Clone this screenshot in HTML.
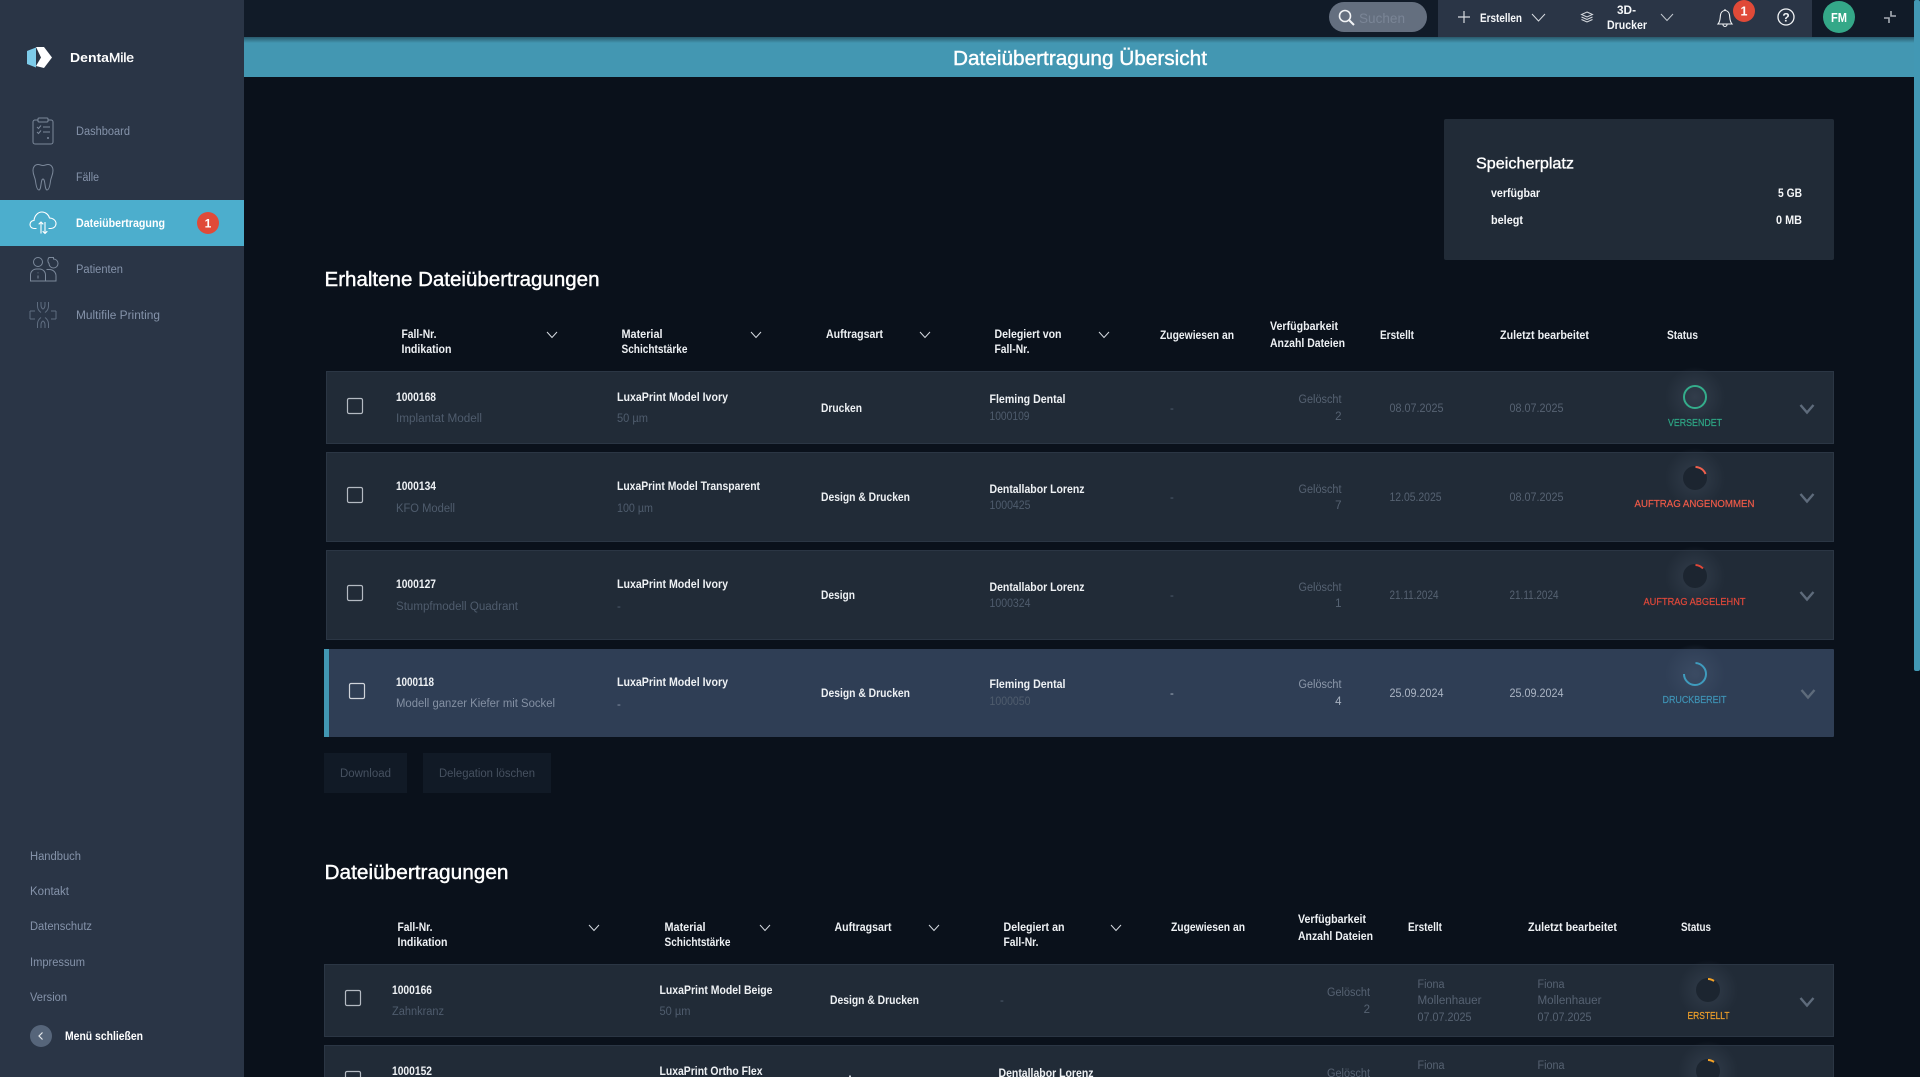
<!DOCTYPE html>
<html lang="de">
<head>
<meta charset="utf-8">
<title>Dateiübertragung Übersicht</title>
<style>
html,body{margin:0;padding:0;background:#0a111b;width:1920px;height:1077px;overflow:hidden}
svg{display:block;font-family:"Liberation Sans",Arial,sans-serif}
text{white-space:pre}
.nav{font-size:11.5px;fill:#8593aa;font-weight:400}
.foot{font-size:11.5px;fill:#8593aa}
.h{font-size:11.5px;font-weight:700;fill:#eef1f4}
.p{font-size:11.5px;font-weight:700;fill:#eef1f4}
.s{font-size:11.5px;fill:#4f5c6d}
.d{font-size:11.5px;fill:#566272}
.g{font-size:11.5px;fill:#566272;text-anchor:end}
.l{font-size:10.5px;font-weight:400;text-anchor:middle;stroke-width:.2px}
.t{font-size:20px;font-weight:400;fill:#fff;stroke:#fff;stroke-width:.4px}
.w{font-size:11.5px;font-weight:700;fill:#f5f7f9}
.row{fill:#212b37;stroke:#2b3644;stroke-width:1}
.cb{fill:none;stroke:#b4bac2;stroke-width:1.2}
.hc{fill:none;stroke:#d5dae0;stroke-width:1}
.rc{fill:none;stroke:#5e6b7b;stroke-width:2.4}
.ic{fill:none;stroke:#7c899b;stroke-width:1}
</style>
</head>
<body>
<svg xmlns="http://www.w3.org/2000/svg" width="1920" height="1077" viewBox="0 0 1920 1077">
<defs>
<linearGradient id="sh" x1="0" y1="0" x2="0" y2="1"><stop offset="0" stop-color="#2a5a6c"/><stop offset="1" stop-color="#4397b2"/></linearGradient>
<radialGradient id="glow"><stop offset="0" stop-color="#323d4b"/><stop offset="1" stop-color="#323d4b" stop-opacity="0"/></radialGradient>
<radialGradient id="glow2"><stop offset="0" stop-color="#3b4b63"/><stop offset="1" stop-color="#3b4b63" stop-opacity="0"/></radialGradient>
<path id="hc" class="hc" d="M-5,-3 L0,2.5 L5,-3"/>
<path id="rc" class="rc" d="M-6.5,-4 L0,3.5 L6.5,-4"/>
</defs>

<!-- main background -->
<rect width="1920" height="1077" fill="#0a111b"/>

<!-- top bar -->
<rect x="244" y="0" width="1670" height="37" fill="#111b28"/>
<rect x="1438" y="0" width="374" height="37" fill="#2a3546"/>
<rect x="1329" y="2" width="98" height="30" rx="15" fill="#646f7f"/>
<circle cx="1345" cy="16" r="5.5" fill="none" stroke="#f2f4f6" stroke-width="1.6"/>
<path d="M1349,20 L1354,25" stroke="#f2f4f6" stroke-width="2"/>
<text x="1359" y="23" font-size="13.5" fill="#7a8596" textLength="46" lengthAdjust="spacingAndGlyphs">Suchen</text>
<path d="M1464,11 V23 M1458,17 H1470" stroke="#d7dbe0" stroke-width="1.2" fill="none"/>
<text class="w" x="1480" y="22" textLength="42" lengthAdjust="spacingAndGlyphs">Erstellen</text>
<path d="M1532,14 L1538.5,21 L1545,14" fill="none" stroke="#d7dbe0" stroke-width="1"/>
<g fill="none" stroke="#d7dbe0" stroke-width="1">
<path d="M1587,12 L1592.5,14.5 L1587,17 L1581.5,14.5 Z"/>
<path d="M1581.5,17 L1587,19.5 L1592.5,17"/>
<path d="M1581.5,19.5 L1587,22 L1592.5,19.5"/>
</g>
<text class="w" x="1617" y="14" textLength="19" lengthAdjust="spacingAndGlyphs">3D-</text>
<text class="w" x="1607" y="29" textLength="40" lengthAdjust="spacingAndGlyphs">Drucker</text>
<path d="M1661,14 L1667,20.5 L1673,14" fill="none" stroke="#c2c8cf" stroke-width="1"/>
<path d="M1718,24 H1732 C1729.5,21 1730,18 1729.5,15 C1729,12 1727,10.5 1725,10.5 C1723,10.5 1721,12 1720.5,15 C1720,18 1720.5,21 1718,24 Z M1723,24.5 a2,2 0 0 0 4,0 M1725,10.5 V9" fill="none" stroke="#f2f4f6" stroke-width="1.1"/>
<circle cx="1744" cy="11" r="11" fill="#e04a38"/>
<text x="1744" y="15.5" font-size="12.5" font-weight="700" fill="#fff" text-anchor="middle">1</text>
<circle cx="1786" cy="17" r="8" fill="none" stroke="#f2f4f6" stroke-width="1.3"/>
<text x="1786" y="21.5" font-size="12" font-weight="700" fill="#f2f4f6" text-anchor="middle">?</text>
<circle cx="1839" cy="17" r="16" fill="#34a888"/>
<text x="1839" y="22" font-size="12.5" font-weight="700" fill="#fff" text-anchor="middle" textLength="16" lengthAdjust="spacingAndGlyphs">FM</text>
<path d="M1884,18 H1889 V23 M1891,11 V16 H1896" fill="none" stroke="#a7adb5" stroke-width="1.6"/>

<!-- teal title bar -->
<rect x="244" y="37" width="1670" height="40" fill="#4397b2"/>
<rect x="244" y="37" width="1670" height="6" fill="url(#sh)"/>
<text x="1080" y="65" font-size="20" fill="#fff" stroke="#fff" stroke-width=".4" text-anchor="middle" textLength="254" lengthAdjust="spacingAndGlyphs">Dateiübertragung Übersicht</text>

<!-- scrollbar -->
<rect x="1914" y="0" width="6" height="671" rx="2" fill="#4298b4"/>

<!-- sidebar -->
<rect x="0" y="0" width="244" height="1077" fill="#2a3546"/>
<path d="M27,51 L36,47.5 V67.5 L27,64 Z" fill="#7dcbe9"/>
<path d="M36,47 H44 L52,57.5 L44,68 L36,66 L41,57.5 Z" fill="#fff"/>
<text x="70" y="62" font-size="13" font-weight="700" fill="#fff" textLength="39" lengthAdjust="spacingAndGlyphs">Denta</text>
<text x="109" y="62" font-size="13" fill="#fff" stroke="#fff" stroke-width=".35" textLength="25" lengthAdjust="spacingAndGlyphs">Mile</text>

<text class="nav" x="76" y="135" textLength="54" lengthAdjust="spacingAndGlyphs">Dashboard</text>
<text class="nav" x="76" y="181" textLength="23" lengthAdjust="spacingAndGlyphs">Fälle</text>
<rect x="0" y="200" width="244" height="46" fill="#4caecd"/>
<text x="76" y="227" font-size="11.5" font-weight="700" fill="#fff" textLength="89" lengthAdjust="spacingAndGlyphs">Dateiübertragung</text>
<circle cx="208" cy="223" r="11" fill="#e04a38"/>
<text x="208" y="227.5" font-size="12" font-weight="700" fill="#fff" text-anchor="middle">1</text>
<text class="nav" x="76" y="273" textLength="47" lengthAdjust="spacingAndGlyphs">Patienten</text>
<text class="nav" x="76" y="319" textLength="84" lengthAdjust="spacingAndGlyphs">Multifile Printing</text>

<!-- nav icons -->
<g class="ic">
<path d="M38,120 H35 a2,2 0 0 0 -2,2 V142 a2,2 0 0 0 2,2 H51 a2,2 0 0 0 2,-2 V122 a2,2 0 0 0 -2,-2 H48"/>
<rect x="38" y="118" width="10" height="4" rx="1"/>
<path d="M37,127 l1.5,1.5 l2.5,-3 M37,132 l1.5,1.5 l2.5,-3 M43,127 H50 M43,132 H50 M47,138 H49 M48,137 V139"/>
<path d="M38,164.5 C35,164.5 33,167 33,170.5 C33,175 35,177 35.5,181 C36,185 37,190 39,190 C41.5,190 40.5,179 43,179 C45.5,179 44.5,190 47,190 C49,190 50,185 50.5,181 C51,177 53,175 53,170.5 C53,167 51,164.5 48,164.5 C46,164.5 45,165.5 43,165.5 C41,165.5 40,164.5 38,164.5 Z"/>
<circle cx="38" cy="262" r="4.5"/>
<path d="M49,257.5 h4.5 v1.5 a4.5,4.5 0 1 1 -4.5,4.5 a4.5,4.5 0 0 1 0,-6 Z"/>
<path d="M30.5,281 V275 a6,6 0 0 1 6,-6 h3 a6,6 0 0 1 6,6 V281 Z"/>
<path d="M38,272.5 V273.3 M38,275.5 V278.5"/>
<path d="M46.5,269.5 h3 a6.5,6.5 0 0 1 6.5,6.5 V281 H46"/>
</g>
<g fill="none" stroke="#5f6d80" stroke-width="1">
<path d="M37.5,302 V306 Q37.5,310 41,312.5 M48.5,302 V306 Q48.5,310 45,312.5 M37.5,328 V324 Q37.5,320 41,317.5 M48.5,328 V324 Q48.5,320 45,317.5"/>
<path d="M41,302 V305 Q41,308 43,309 Q45,308 45,305 V302 M41,328 V325 Q41,322 43,321 Q45,322 45,325 V328"/>
<path d="M30,311 H35 M56,311 H51 M30,319 H35 M56,319 H51 M30,311 V319 M56,311 V319"/>
</g>
<g fill="none" stroke="#fff" stroke-width="1.1">
<path d="M36.5,228.5 H34 C31.5,228.5 30,226.5 30,224.5 C30,222 32,220.5 34,220.5 C34.5,215.5 38,212 42,212 C45.5,212 48.5,214.5 49.5,218 C53,218 56,220.5 56,223.5 C56,226.5 53.5,228.5 51,228.5 H48.5"/>
<path d="M41,233.5 V222 M38.7,224.3 L41,222 L43.3,224.3 M45,222 V233.5 M42.7,231.2 L45,233.5 L47.3,231.2"/>
</g>

<!-- sidebar footer -->
<text class="foot" x="30" y="860" textLength="51" lengthAdjust="spacingAndGlyphs">Handbuch</text>
<text class="foot" x="30" y="895" textLength="39" lengthAdjust="spacingAndGlyphs">Kontakt</text>
<text class="foot" x="30" y="930" textLength="62" lengthAdjust="spacingAndGlyphs">Datenschutz</text>
<text class="foot" x="30" y="966" textLength="55" lengthAdjust="spacingAndGlyphs">Impressum</text>
<text class="foot" x="30" y="1001" textLength="37" lengthAdjust="spacingAndGlyphs">Version</text>
<circle cx="41" cy="1036" r="11" fill="#56657a"/>
<path d="M42.5,1032.5 L39,1036 L42.5,1039.5" fill="none" stroke="#e5e8ec" stroke-width="1.2"/>
<text x="65" y="1040" font-size="11.5" font-weight="700" fill="#fff" textLength="78" lengthAdjust="spacingAndGlyphs">Menü schließen</text>

<!-- storage card -->
<rect x="1444" y="119" width="390" height="141" rx="2" fill="#212b37"/>
<text x="1476" y="168.5" font-size="16" fill="#fff" stroke="#fff" stroke-width=".35" textLength="98" lengthAdjust="spacingAndGlyphs">Speicherplatz</text>
<text class="w" x="1491" y="197" textLength="49" lengthAdjust="spacingAndGlyphs">verfügbar</text>
<text class="w" x="1778" y="197" textLength="24" lengthAdjust="spacingAndGlyphs">5 GB</text>
<text class="w" x="1491" y="224" textLength="32" lengthAdjust="spacingAndGlyphs">belegt</text>
<text class="w" x="1776" y="224" textLength="26" lengthAdjust="spacingAndGlyphs">0 MB</text>

<!-- section 1 -->
<text class="t" x="324.5" y="286" textLength="275" lengthAdjust="spacingAndGlyphs">Erhaltene Dateiübertragungen</text>

<text class="h" x="401.5" y="338" textLength="35" lengthAdjust="spacingAndGlyphs">Fall-Nr.</text>
<text class="h" x="401.5" y="353" textLength="50" lengthAdjust="spacingAndGlyphs">Indikation</text>
<use href="#hc" x="552" y="335"/>
<text class="h" x="621.5" y="338" textLength="41" lengthAdjust="spacingAndGlyphs">Material</text>
<text class="h" x="621.5" y="353" textLength="66" lengthAdjust="spacingAndGlyphs">Schichtstärke</text>
<use href="#hc" x="756" y="335"/>
<text class="h" x="826" y="338" textLength="57" lengthAdjust="spacingAndGlyphs">Auftragsart</text>
<use href="#hc" x="925" y="335"/>
<text class="h" x="994.5" y="338" textLength="67" lengthAdjust="spacingAndGlyphs">Delegiert von</text>
<text class="h" x="994.5" y="353" textLength="35" lengthAdjust="spacingAndGlyphs">Fall-Nr.</text>
<use href="#hc" x="1104" y="335"/>
<text class="h" x="1160" y="339" textLength="74" lengthAdjust="spacingAndGlyphs">Zugewiesen an</text>
<text class="h" x="1270" y="330" textLength="68" lengthAdjust="spacingAndGlyphs">Verfügbarkeit</text>
<text class="h" x="1270" y="347" textLength="75" lengthAdjust="spacingAndGlyphs">Anzahl Dateien</text>
<text class="h" x="1380" y="339" textLength="34" lengthAdjust="spacingAndGlyphs">Erstellt</text>
<text class="h" x="1500" y="339" textLength="89" lengthAdjust="spacingAndGlyphs">Zuletzt bearbeitet</text>
<text class="h" x="1667" y="339" textLength="31" lengthAdjust="spacingAndGlyphs">Status</text>

<!-- row 1 -->
<rect class="row" x="326.5" y="371.5" width="1507" height="72"/>
<rect class="cb" x="347.5" y="398.5" width="15" height="15" rx="1.5"/>
<text class="p" x="396" y="401" textLength="40" lengthAdjust="spacingAndGlyphs">1000168</text>
<text class="s" x="396" y="422" textLength="86" lengthAdjust="spacingAndGlyphs">Implantat Modell</text>
<text class="p" x="617" y="401" textLength="111" lengthAdjust="spacingAndGlyphs">LuxaPrint Model Ivory</text>
<text class="s" x="617" y="422" textLength="31" lengthAdjust="spacingAndGlyphs">50 µm</text>
<text class="p" x="821" y="412" textLength="41" lengthAdjust="spacingAndGlyphs">Drucken</text>
<text class="p" x="989.5" y="403" textLength="76" lengthAdjust="spacingAndGlyphs">Fleming Dental</text>
<text class="s" x="989.5" y="420" textLength="40" lengthAdjust="spacingAndGlyphs">1000109</text>
<text class="s" x="1170" y="412">-</text>
<text class="g" x="1341.5" y="403" textLength="43" lengthAdjust="spacingAndGlyphs">Gelöscht</text>
<text class="g" x="1341.5" y="420">2</text>
<text class="d" x="1389.5" y="412" textLength="54" lengthAdjust="spacingAndGlyphs">08.07.2025</text>
<text class="d" x="1509.5" y="412" textLength="54" lengthAdjust="spacingAndGlyphs">08.07.2025</text>
<circle cx="1695" cy="397" r="30" fill="url(#glow)"/>
<circle cx="1695" cy="397" r="11" fill="none" stroke="#34ad8b" stroke-width="2"/>
<text class="l" x="1695" y="426" fill="#2ea886" stroke="#2ea886" textLength="54" lengthAdjust="spacingAndGlyphs">VERSENDET</text>
<use href="#rc" x="1807" y="409"/>

<!-- row 2 -->
<rect class="row" x="326.5" y="452.5" width="1507" height="89"/>
<rect class="cb" x="347.5" y="487.5" width="15" height="15" rx="1.5"/>
<text class="p" x="396" y="490" textLength="40" lengthAdjust="spacingAndGlyphs">1000134</text>
<text class="s" x="396" y="512" textLength="59" lengthAdjust="spacingAndGlyphs">KFO Modell</text>
<text class="p" x="617" y="490" textLength="143" lengthAdjust="spacingAndGlyphs">LuxaPrint Model Transparent</text>
<text class="s" x="617" y="512" textLength="36" lengthAdjust="spacingAndGlyphs">100 µm</text>
<text class="p" x="821" y="501" textLength="89" lengthAdjust="spacingAndGlyphs">Design &amp; Drucken</text>
<text class="p" x="989.5" y="493" textLength="95" lengthAdjust="spacingAndGlyphs">Dentallabor Lorenz</text>
<text class="s" x="989.5" y="509" textLength="41" lengthAdjust="spacingAndGlyphs">1000425</text>
<text class="s" x="1170" y="501">-</text>
<text class="g" x="1341.5" y="493" textLength="43" lengthAdjust="spacingAndGlyphs">Gelöscht</text>
<text class="g" x="1341.5" y="509">7</text>
<text class="d" x="1389.5" y="501" textLength="52" lengthAdjust="spacingAndGlyphs">12.05.2025</text>
<text class="d" x="1509.5" y="501" textLength="54" lengthAdjust="spacingAndGlyphs">08.07.2025</text>
<circle cx="1695" cy="478" r="30" fill="url(#glow)"/>
<circle cx="1695" cy="478" r="12" fill="#1c2530"/>
<path d="M1695.5,467 A11,11 0 0 1 1705.5,474" fill="none" stroke="#f0604d" stroke-width="2"/>
<text class="l" x="1694.5" y="507" fill="#ee5a48" stroke="#ee5a48" textLength="120" lengthAdjust="spacingAndGlyphs">AUFTRAG ANGENOMMEN</text>
<use href="#rc" x="1807" y="498"/>

<!-- row 3 -->
<rect class="row" x="326.5" y="550.5" width="1507" height="89"/>
<rect class="cb" x="347.5" y="585.5" width="15" height="15" rx="1.5"/>
<text class="p" x="396" y="588" textLength="40" lengthAdjust="spacingAndGlyphs">1000127</text>
<text class="s" x="396" y="610" textLength="122" lengthAdjust="spacingAndGlyphs">Stumpfmodell Quadrant</text>
<text class="p" x="617" y="588" textLength="111" lengthAdjust="spacingAndGlyphs">LuxaPrint Model Ivory</text>
<text class="s" x="617" y="610">-</text>
<text class="p" x="821" y="599" textLength="34" lengthAdjust="spacingAndGlyphs">Design</text>
<text class="p" x="989.5" y="591" textLength="95" lengthAdjust="spacingAndGlyphs">Dentallabor Lorenz</text>
<text class="s" x="989.5" y="607" textLength="41" lengthAdjust="spacingAndGlyphs">1000324</text>
<text class="s" x="1170" y="599">-</text>
<text class="g" x="1341.5" y="591" textLength="43" lengthAdjust="spacingAndGlyphs">Gelöscht</text>
<text class="g" x="1341.5" y="607">1</text>
<text class="d" x="1389.5" y="599" textLength="49" lengthAdjust="spacingAndGlyphs">21.11.2024</text>
<text class="d" x="1509.5" y="599" textLength="49" lengthAdjust="spacingAndGlyphs">21.11.2024</text>
<circle cx="1695" cy="576" r="30" fill="url(#glow)"/>
<circle cx="1695" cy="576" r="12" fill="#1c2530"/>
<path d="M1695.5,565 A11,11 0 0 1 1703,568.5" fill="none" stroke="#e0483a" stroke-width="2"/>
<text class="l" x="1694.5" y="605" fill="#e0483a" stroke="#e0483a" textLength="102" lengthAdjust="spacingAndGlyphs">AUFTRAG ABGELEHNT</text>
<use href="#rc" x="1807" y="596"/>

<!-- row 4 (selected) -->
<rect x="324" y="649" width="1510" height="88" rx="1" fill="#2f3e55"/>
<rect x="324" y="649" width="5" height="88" fill="#4298b4"/>
<rect class="cb" x="349.5" y="683.5" width="15" height="15" rx="1.5" style="stroke:#d0d4da"/>
<text class="p" x="396" y="686" textLength="38" lengthAdjust="spacingAndGlyphs">1000118</text>
<text class="s" x="396" y="707" textLength="159" lengthAdjust="spacingAndGlyphs" style="fill:#8490a3">Modell ganzer Kiefer mit Sockel</text>
<text class="p" x="617" y="686" textLength="111" lengthAdjust="spacingAndGlyphs">LuxaPrint Model Ivory</text>
<text class="s" x="617" y="708" style="fill:#8490a3">-</text>
<text class="p" x="821" y="697" textLength="89" lengthAdjust="spacingAndGlyphs">Design &amp; Drucken</text>
<text class="p" x="989.5" y="688" textLength="76" lengthAdjust="spacingAndGlyphs">Fleming Dental</text>
<text class="s" x="989.5" y="705" textLength="41" lengthAdjust="spacingAndGlyphs">1000050</text>
<text class="s" x="1170" y="697" style="fill:#a7b1c0">-</text>
<text class="g" x="1341.5" y="688" textLength="43" lengthAdjust="spacingAndGlyphs" style="fill:#8c98aa">Gelöscht</text>
<text class="g" x="1341.5" y="705" style="fill:#a7b1c0">4</text>
<text class="d" x="1389.5" y="697" textLength="54" lengthAdjust="spacingAndGlyphs" style="fill:#aab4c3">25.09.2024</text>
<text class="d" x="1509.5" y="697" textLength="54" lengthAdjust="spacingAndGlyphs" style="fill:#aab4c3">25.09.2024</text>
<circle cx="1695" cy="674" r="30" fill="url(#glow2)"/>
<path d="M1695.5,663 A11,11 0 1 1 1684,674" fill="none" stroke="#3f9bbd" stroke-width="2"/>
<text class="l" x="1694.5" y="703" fill="#3f93b5" stroke="#3f93b5" textLength="64" lengthAdjust="spacingAndGlyphs">DRUCKBEREIT</text>
<use href="#rc" x="1808" y="694"/>

<!-- buttons -->
<rect x="324" y="753" width="83" height="40" fill="#111a26"/>
<text x="340" y="777" font-size="11.5" fill="#465160" textLength="51" lengthAdjust="spacingAndGlyphs">Download</text>
<rect x="423" y="753" width="128" height="40" fill="#111a26"/>
<text x="439" y="777" font-size="11.5" fill="#465160" textLength="96" lengthAdjust="spacingAndGlyphs">Delegation löschen</text>

<!-- section 2 -->
<text class="t" x="324.5" y="879" textLength="184" lengthAdjust="spacingAndGlyphs">Dateiübertragungen</text>

<text class="h" x="397.5" y="931" textLength="35" lengthAdjust="spacingAndGlyphs">Fall-Nr.</text>
<text class="h" x="397.5" y="946" textLength="50" lengthAdjust="spacingAndGlyphs">Indikation</text>
<use href="#hc" x="594" y="928"/>
<text class="h" x="664.5" y="931" textLength="41" lengthAdjust="spacingAndGlyphs">Material</text>
<text class="h" x="664.5" y="946" textLength="66" lengthAdjust="spacingAndGlyphs">Schichtstärke</text>
<use href="#hc" x="765" y="928"/>
<text class="h" x="834.5" y="931" textLength="57" lengthAdjust="spacingAndGlyphs">Auftragsart</text>
<use href="#hc" x="934" y="928"/>
<text class="h" x="1003.5" y="931" textLength="61" lengthAdjust="spacingAndGlyphs">Delegiert an</text>
<text class="h" x="1003.5" y="946" textLength="35" lengthAdjust="spacingAndGlyphs">Fall-Nr.</text>
<use href="#hc" x="1116" y="928"/>
<text class="h" x="1171" y="931" textLength="74" lengthAdjust="spacingAndGlyphs">Zugewiesen an</text>
<text class="h" x="1298" y="923" textLength="68" lengthAdjust="spacingAndGlyphs">Verfügbarkeit</text>
<text class="h" x="1298" y="940" textLength="75" lengthAdjust="spacingAndGlyphs">Anzahl Dateien</text>
<text class="h" x="1408" y="931" textLength="34" lengthAdjust="spacingAndGlyphs">Erstellt</text>
<text class="h" x="1528" y="931" textLength="89" lengthAdjust="spacingAndGlyphs">Zuletzt bearbeitet</text>
<text class="h" x="1681" y="931" textLength="30" lengthAdjust="spacingAndGlyphs">Status</text>

<!-- table 2 row 1 -->
<rect class="row" x="324.5" y="964.5" width="1509" height="72"/>
<rect class="cb" x="345.5" y="990.5" width="15" height="15" rx="1.5"/>
<text class="p" x="392" y="994" textLength="40" lengthAdjust="spacingAndGlyphs">1000166</text>
<text class="s" x="392" y="1015" textLength="52" lengthAdjust="spacingAndGlyphs">Zahnkranz</text>
<text class="p" x="659.5" y="994" textLength="113" lengthAdjust="spacingAndGlyphs">LuxaPrint Model Beige</text>
<text class="s" x="659.5" y="1015" textLength="31" lengthAdjust="spacingAndGlyphs">50 µm</text>
<text class="p" x="830" y="1004" textLength="89" lengthAdjust="spacingAndGlyphs">Design &amp; Drucken</text>
<text class="s" x="1000" y="1004">-</text>
<text class="g" x="1370" y="996" textLength="43" lengthAdjust="spacingAndGlyphs">Gelöscht</text>
<text class="g" x="1370" y="1013">2</text>
<text class="d" x="1417.5" y="988" textLength="27" lengthAdjust="spacingAndGlyphs">Fiona</text>
<text class="d" x="1417.5" y="1004" textLength="64" lengthAdjust="spacingAndGlyphs">Mollenhauer</text>
<text class="d" x="1417.5" y="1021" textLength="54" lengthAdjust="spacingAndGlyphs">07.07.2025</text>
<text class="d" x="1537.5" y="988" textLength="27" lengthAdjust="spacingAndGlyphs">Fiona</text>
<text class="d" x="1537.5" y="1004" textLength="64" lengthAdjust="spacingAndGlyphs">Mollenhauer</text>
<text class="d" x="1537.5" y="1021" textLength="54" lengthAdjust="spacingAndGlyphs">07.07.2025</text>
<circle cx="1708" cy="990" r="30" fill="url(#glow)"/>
<circle cx="1708" cy="990" r="12" fill="#1c2530"/>
<path d="M1708,979 A11,11 0 0 1 1714,981" fill="none" stroke="#f4a226" stroke-width="2"/>
<text class="l" x="1708.5" y="1019" fill="#f0a02a" stroke="#f0a02a" textLength="42" lengthAdjust="spacingAndGlyphs">ERSTELLT</text>
<use href="#rc" x="1807" y="1002"/>

<!-- table 2 row 2 -->
<rect class="row" x="324.5" y="1045.5" width="1509" height="72"/>
<rect class="cb" x="345.5" y="1071.5" width="15" height="15" rx="1.5"/>
<text class="p" x="392" y="1075" textLength="40" lengthAdjust="spacingAndGlyphs">1000152</text>
<text class="p" x="659.5" y="1075" textLength="103" lengthAdjust="spacingAndGlyphs">LuxaPrint Ortho Flex</text>
<rect x="849" y="1075.5" width="2" height="1.5" fill="#c9ced4"/>
<text class="p" x="998.5" y="1077" textLength="95" lengthAdjust="spacingAndGlyphs">Dentallabor Lorenz</text>
<text class="g" x="1370" y="1077" textLength="43" lengthAdjust="spacingAndGlyphs">Gelöscht</text>
<text class="d" x="1417.5" y="1069" textLength="27" lengthAdjust="spacingAndGlyphs">Fiona</text>
<text class="d" x="1537.5" y="1069" textLength="27" lengthAdjust="spacingAndGlyphs">Fiona</text>
<circle cx="1708" cy="1071" r="30" fill="url(#glow)"/>
<circle cx="1708" cy="1071" r="12" fill="#1c2530"/>
<path d="M1708,1060 A11,11 0 0 1 1714,1062" fill="none" stroke="#f4a226" stroke-width="2"/>
</svg>
</body>
</html>
